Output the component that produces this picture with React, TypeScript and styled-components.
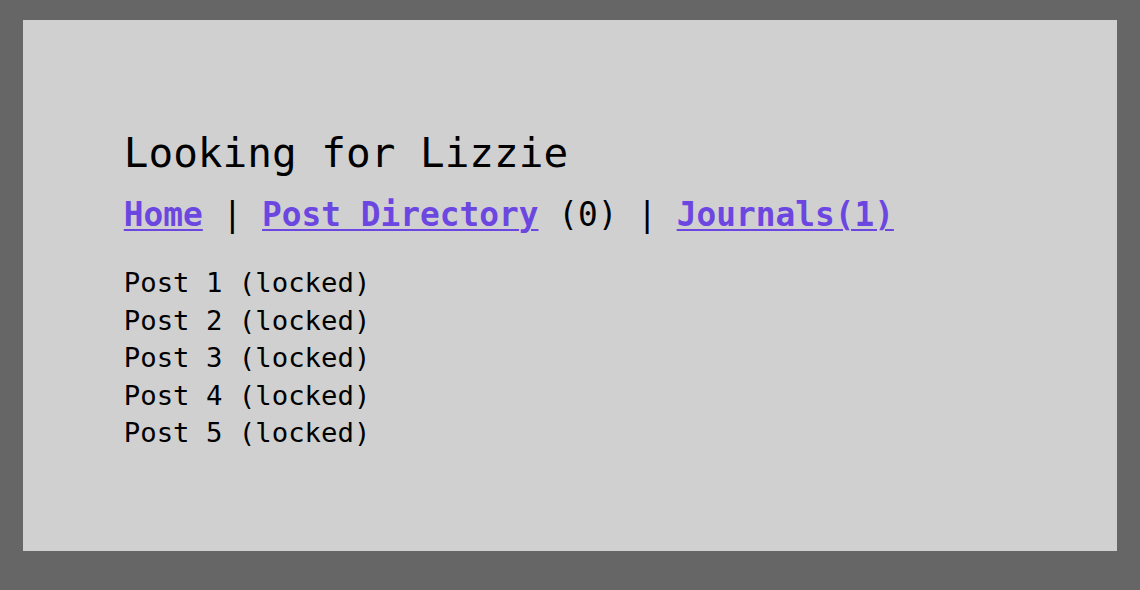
import { createGlobalStyle } from "styled-components"
import styled from "styled-components"

const GlobalStyle = createGlobalStyle`
	html, body {
		margin: 0;
		padding: 0;
		background: #666666;
	}
	body {
		font-family: "DejaVu Sans Mono", "Liberation Mono", monospace;
		color: #000;
	}
`

const Page = styled.div`
	padding-top: 20px;
	display: flex;
	justify-content: center;
`

const Panel = styled.main`
	box-sizing: border-box;
	width: 96%;
	height: 531px;
	background: #d0d0d0;
	padding: 108px 101px 0;
`

const Title = styled.h1`
	margin: 0;
	font-size: 41px;
	font-weight: normal;
	line-height: 50px;
`

const Nav = styled.nav`
	margin-top: 15px;
	font-size: 32.8px;
	line-height: 44px;
	white-space: pre;
`

const NavLink = styled.a`
	color: #6c46e0;
	font-weight: bold;
	text-decoration: underline;
	text-underline-offset: 3px;
	text-decoration-thickness: 2px;
`

const PostList = styled.ul`
	list-style: none;
	margin: 27px 0 0;
	padding: 0;
`

const PostItem = styled.li`
	font-size: 27.3px;
	line-height: 37.5px;
`

const posts = [1, 2, 3, 4, 5]

export default function App() {
	return (
		<>
			<GlobalStyle />
			<Page>
				<Panel>
					<Title>Looking for Lizzie</Title>
					<Nav>
						<NavLink href="#">Home</NavLink>
						{" | "}
						<NavLink href="#">Post Directory</NavLink>
						{" (0) | "}
						<NavLink href="#">Journals(1)</NavLink>
					</Nav>
					<PostList>
						{posts.map((n) => (
							<PostItem key={n}>Post {n} (locked)</PostItem>
						))}
					</PostList>
				</Panel>
			</Page>
		</>
	)
}
